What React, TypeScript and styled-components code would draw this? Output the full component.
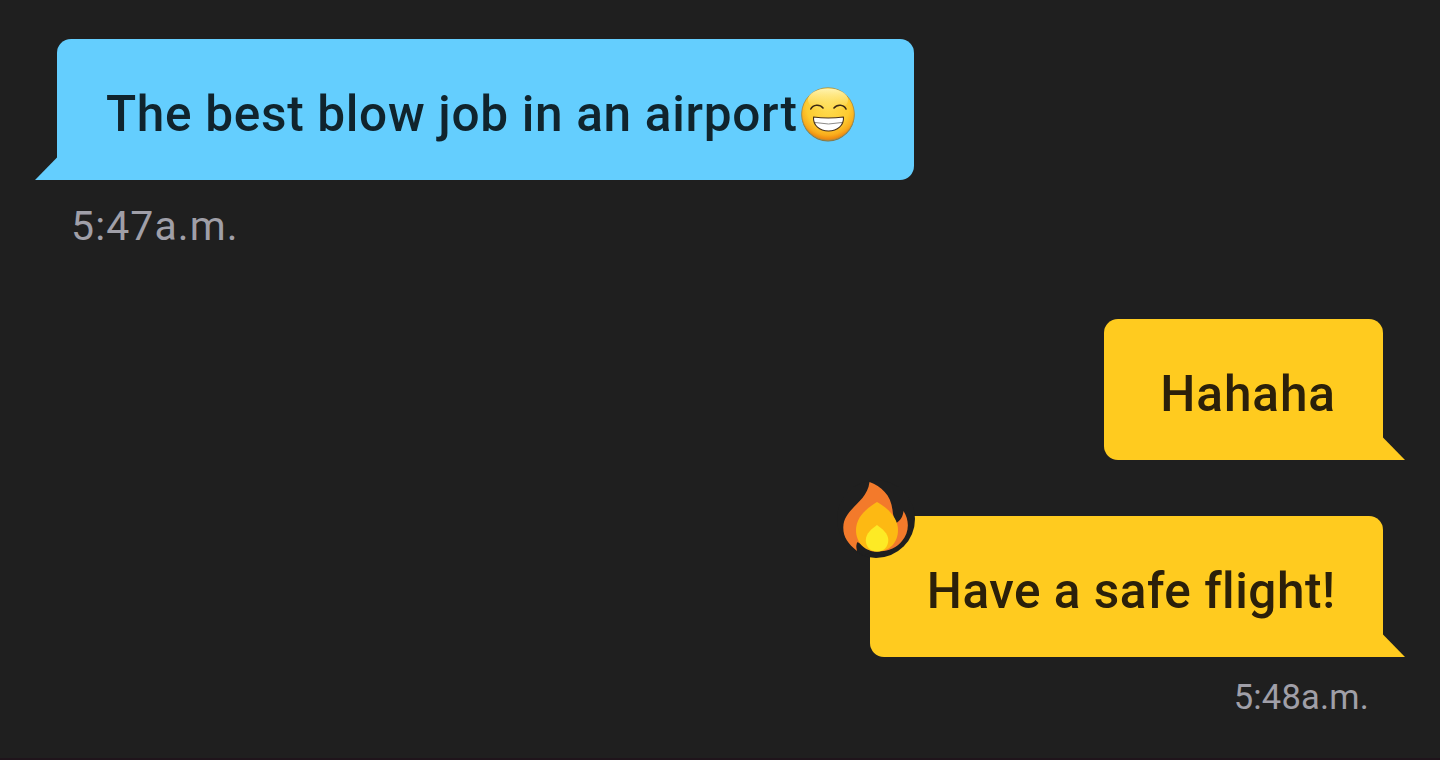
import React from "react";
import styled, { createGlobalStyle } from "styled-components";

const Global = createGlobalStyle`
  html, body { margin: 0; padding: 0; background: #1f1f1f; overflow: hidden; }
  * { box-sizing: border-box; }
`;

type Side = "in" | "out";

const Screen = styled.main`
  display: flex;
  flex-direction: column;
  height: 760px;
  padding: 39px 57px 0;
  background: #1f1f1f;
  border-bottom: 2px solid #1f141b;
  font-family: Roboto, "Liberation Sans", sans-serif;
`;

const Group = styled.section<{ $side: Side }>`
  display: flex;
  flex-direction: column;
  align-items: ${(p) => (p.$side === "in" ? "flex-start" : "flex-end")};
  gap: 56px;
  height: ${(p) => (p.$side === "in" ? "280px" : "auto")};
`;

const Message = styled.div`
  display: flex;
  flex-direction: column;
  align-items: inherit;
`;

const Bubble = styled.div<{ $side: Side; $width: number }>`
  position: relative;
  display: flex;
  align-items: center;
  justify-content: ${(p) => (p.$side === "in" ? "flex-start" : "flex-end")};
  width: ${(p) => p.$width}px;
  height: 141px;
  padding: 0 48px 0 49px;
  color: ${(p) => (p.$side === "in" ? "#10242d" : "#2b200a")};
  background: ${(p) => (p.$side === "in" ? "#64cefe" : "#ffcb1f")};
  border-radius: ${(p) => (p.$side === "in" ? "14px 14px 14px 0" : "14px 14px 0 14px")};

  &::after {
    content: "";
    position: absolute;
    bottom: 0;
    ${(p) => (p.$side === "in" ? "left: -22px" : "right: -22px")};
    width: 22.5px;
    height: 23px;
    background: inherit;
    clip-path: ${(p) =>
      p.$side === "in" ? "polygon(100% 0, 100% 100%, 0 100%)" : "polygon(0 0, 100% 100%, 0 100%)"};
  }
`;

const Text = styled.span<{ $spacing: number }>`
  padding-top: 8px;
  font-size: 49.5px;
  line-height: 60px;
  font-weight: 500;
  letter-spacing: ${(p) => p.$spacing}px;
  margin-right: ${(p) => -p.$spacing}px;
  white-space: nowrap;
`;

const Time = styled.time<{ $size: number; $spacing: number; $top: number }>`
  margin: ${(p) => p.$top}px 14px 0;
  font-size: ${(p) => p.$size}px;
  line-height: 1.2;
  letter-spacing: ${(p) => p.$spacing}px;
  color: #a09fa8;
`;

const GrinIcon = styled.svg`
  flex: none;
  width: 56px;
  height: 56px;
  margin: 8px 0 0 3px;
`;

const Reaction = styled.div`
  position: absolute;
  top: -36px;
  left: -33px;
  width: 78px;
  height: 78px;
  border-radius: 50%;
  background: #1f1f1f;
`;

const FlameIcon = styled.svg`
  display: block;
  width: 78px;
  height: 78px;
`;

const Grin = () => (
  <GrinIcon viewBox="0 0 56 56" aria-label="Grinning face">
    <defs>
      <radialGradient id="face" cx=".5" cy=".36" r=".66">
        <stop offset="0" stopColor="#ffdc50" />
        <stop offset=".62" stopColor="#fdcb30" />
        <stop offset=".82" stopColor="#f9ac1c" />
        <stop offset="1" stopColor="#e5750a" />
      </radialGradient>
      <linearGradient id="shine" x1="0" y1="0" x2="0" y2="1">
        <stop offset="0" stopColor="#fff6b8" stopOpacity=".95" />
        <stop offset="1" stopColor="#ffe878" stopOpacity="0" />
      </linearGradient>
    </defs>
    <circle cx="28" cy="28.8" r="26.6" fill="#7f7248" />
    <circle cx="28" cy="28" r="26.3" fill="url(#face)" stroke="#a8924a" strokeWidth=".8" />
    <ellipse cx="28" cy="14" rx="20" ry="11.500" fill="url(#shine)" />
    <path d="M10.800 23C13 18.200 20 18 23 22M34 22C37 18 44 18.200 46 23" fill="none" stroke="#3c2914" strokeWidth="1.6" strokeLinecap="round" />
    <path d="M13.500 31Q28 33 43.500 31C44 39.500 37.500 45 28.500 45S13 39.500 13.500 31Z" fill="#fff" stroke="#48301a" strokeWidth="1.1" strokeLinejoin="round" />
    <path d="M15 36.500Q28.500 39.500 42 36.500" fill="none" stroke="#8c8a88" strokeWidth="1" />
  </GrinIcon>
);

const Flame = () => (
  <FlameIcon viewBox="837 480 78 78" aria-label="Fire">
    <path d="M869.500 482C881 486 891 495 892.500 510C893 515 894 520 896.500 523C901 520 903 516 903.500 511C910 521 909 533 902 541C897 547 890 551.500 877 551.500L857 551C848 544 843 537 843.300 527C844 508 867 503 869.500 482Z" fill="#f37a2b" />
    <path d="M857 551Q855.500 545 857.500 542L872 551.500L864 556Z" fill="#1f1f1f" />
    <path d="M877 502C888 508 898 518 898 530C898 543 889 551.500 877 551.500S856 543 856 530C856 517 867 508 877 502Z" fill="#fdb913" />
    <path d="M877 525C882 528.500 888.300 533.500 888.300 540C888.300 547 883.500 551.500 877 551.500S865.800 547 865.800 540C865.800 533.500 872 528.500 877 525Z" fill="#fdea25" />
  </FlameIcon>
);

export default function App() {
  return (
    <>
      <Global />
      <Screen>
        <Group $side="in">
          <Message>
            <Bubble $side="in" $width={857}>
              <Text $spacing={0.69}>The best blow job in an airport</Text>
              <Grin />
            </Bubble>
            <Time $size={41} $spacing={1.1} $top={22}>5:47a.m.</Time>
          </Message>
        </Group>
        <Group $side="out">
          <Bubble $side="out" $width={279}>
            <Text $spacing={0.9}>Hahaha</Text>
          </Bubble>
          <Message>
            <Bubble $side="out" $width={513}>
              <Reaction>
                <Flame />
              </Reaction>
              <Text $spacing={0.5}>Have a safe flight!</Text>
            </Bubble>
            <Time $size={34.5} $spacing={0.2} $top={20}>5:48a.m.</Time>
          </Message>
        </Group>
      </Screen>
    </>
  );
}
